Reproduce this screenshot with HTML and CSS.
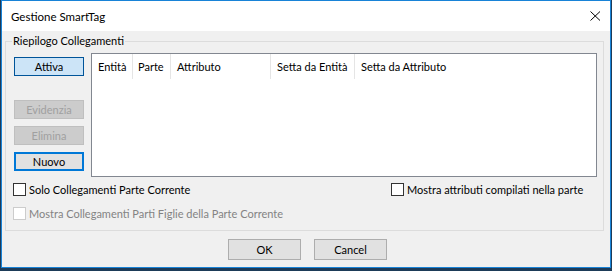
FILE: index.html
```html
<!DOCTYPE html>
<html lang="it">
<head>
    <meta charset="UTF-8">
    <title>Gestione SmartTag</title>
    <link rel="stylesheet" href="styles.css">
</head>
<body>
    <div class="window">
        <!-- Barra del titolo -->
        <div class="titlebar">
            <span class="title">Gestione SmartTag</span>
            <svg class="close" width="11" height="10" viewBox="0 0 11 10">
                <path d="M0.5 0.5 L10 9.5 M10 0.5 L0.5 9.5" stroke="#000" stroke-width="1" fill="none"/>
            </svg>
        </div>

        <div class="content">
            <!-- Gruppo riepilogo -->
            <div class="group">
                <span class="legend">Riepilogo Collegamenti</span>

                <div class="group-top">
                    <div class="side-buttons">
                        <button class="btn btn-hot">Attiva</button>
                        <button class="btn btn-gap" disabled>Evidenzia</button>
                        <button class="btn" disabled>Elimina</button>
                        <button class="btn btn-default">Nuovo</button>
                    </div>

                    <div class="list">
                        <div class="list-header">
                            <div class="col col-ent">Entità</div>
                            <div class="col col-parte">Parte</div>
                            <div class="col col-attr">Attributo</div>
                            <div class="col col-setent">Setta da Entità</div>
                            <div class="col col-last">Setta da Attributo</div>
                        </div>
                    </div>
                </div>

                <div class="check-row">
                    <label class="check"><span class="box"></span>Solo Collegamenti Parte Corrente</label>
                    <label class="check"><span class="box"></span>Mostra attributi compilati nella parte</label>
                </div>
                <div class="check-row">
                    <label class="check disabled"><span class="box"></span>Mostra Collegamenti Parti Figlie della Parte Corrente</label>
                </div>
            </div>

            <!-- Pulsanti finali -->
            <div class="footer">
                <button class="btn btn-dialog">OK</button>
                <button class="btn btn-dialog">Cancel</button>
            </div>
        </div>
    </div>
</body>
</html>
```

FILE: styles.css
```css
body {
    margin: 0;
    padding: 0;
    background-color: #1d3b58;
    font-family: Lato, "Noto Sans", sans-serif;
    font-size: 11px;
    color: #000;
}

.window {
    margin-left: 1px;
    width: 610px;
    height: 268px;
    box-sizing: border-box;
    border: 1px solid #1883d7;
    display: flex;
    flex-direction: column;
    background-color: #f0f0f0;
}

/* Barra del titolo */
.titlebar {
    height: 30px;
    background-color: #fff;
    display: flex;
    align-items: center;
    justify-content: space-between;
    padding: 0 9px;
}

.title {
    font-size: 11.5px;
}

.close {
    display: block;
}

.content {
    flex: 1;
    display: flex;
    flex-direction: column;
}

/* Gruppo */
.group {
    position: relative;
    margin: 10px 6px 0 3px;
    height: 190px;
    box-sizing: border-box;
    border: 1px solid #dcdcdc;
    padding: 11px 6px 0 8px;
}

.legend {
    position: absolute;
    top: -9px;
    left: 6px;
    padding: 0 1px;
    background-color: #f0f0f0;
    line-height: 16px;
}

.group-top {
    display: flex;
    gap: 7px;
}

.side-buttons {
    width: 70px;
    padding-top: 4px;
    display: flex;
    flex-direction: column;
    gap: 7px;
}

/* Pulsanti */
.btn {
    font-family: inherit;
    font-size: 11px;
    height: 19px;
    padding: 0;
    margin: 0;
    box-sizing: border-box;
    border: 1px solid #adadad;
    background-color: #e1e1e1;
    color: #000;
    line-height: 15px;
}

.btn-hot {
    background-color: #cce4f7;
    border-color: #005499;
}

.btn-gap {
    margin-top: 17px;
}

.btn:disabled {
    background-color: #cccccc;
    border-color: #bfbfbf;
    color: #a0a0a0;
}

.btn-default {
    border: 2px solid #0078d7;
    line-height: 13px;
}

.btn-dialog {
    width: 73px;
    height: 21px;
}

/* Lista */
.list {
    flex: 1;
    height: 124px;
    box-sizing: border-box;
    border: 1px solid #828790;
    background-color: #fff;
}

.list-header {
    display: flex;
    height: 25px;
}

.col {
    display: flex;
    align-items: center;
    box-sizing: border-box;
    padding-left: 6px;
    border-right: 1px solid #e5e5e5;
    white-space: nowrap;
}

.col-ent {
    width: 41px;
}

.col-parte {
    width: 38px;
    padding-left: 5px;
}

.col-attr {
    width: 100px;
}

.col-setent {
    width: 84px;
}

.col-last {
    border-right: none;
}

/* Caselle di controllo */
.check-row {
    display: grid;
    grid-template-columns: 378px auto;
    margin-left: -1px;
    height: 24px;
    align-items: center;
}

.check-row:first-of-type {
    margin-top: 5px;
}

.check {
    display: flex;
    align-items: center;
    gap: 3px;
    white-space: nowrap;
}

.box {
    width: 13px;
    height: 13px;
    box-sizing: border-box;
    border: 1px solid #333;
    background-color: #fff;
}

.check.disabled {
    color: #838383;
}

.check.disabled .box {
    border-color: #cccccc;
}

.footer {
    display: flex;
    gap: 13px;
    padding-left: 226px;
    margin-top: 8px;
}
```
